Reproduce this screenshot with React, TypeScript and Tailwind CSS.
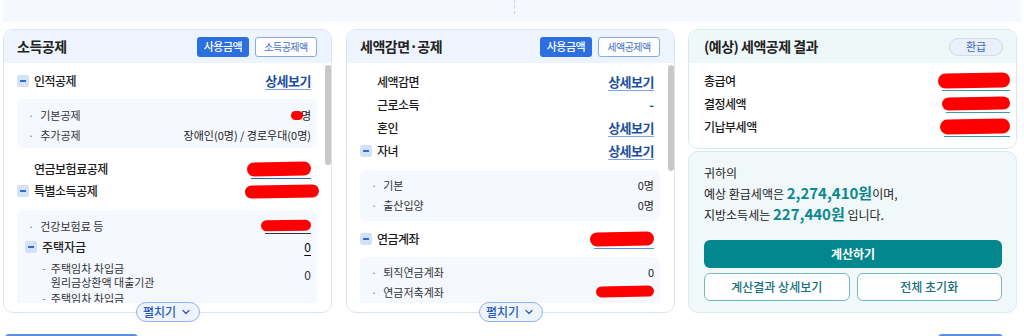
import { ChevronDown } from "lucide-react";

const KR = "font-['Noto_Sans_CJK_KR','Liberation_Sans',sans-serif]";

function Minus() {
  return (
    <span className="flex h-[12px] w-[12px] shrink-0 items-center justify-center rounded-[2px] bg-[#d4e2f8]">
      <span className="h-[2px] w-[6px] bg-[#2f6ad8]" />
    </span>
  );
}

function Detail() {
  return (
    <span className="text-[13px] font-bold tracking-[-0.5px] text-[#1d4f9f] underline decoration-[#7aa3e8] underline-offset-[3px]">
      상세보기
    </span>
  );
}

// 가려진 금액 (빨간 낙서)
function Blot({ size, line }: { size: string; line?: string }) {
  return (
    <span className="relative inline-flex items-center">
      {line && <span className={`absolute bottom-[-3px] left-[4px] right-0 h-[1px] ${line}`} />}
      <span className={`rounded-full bg-[#ff0000] -rotate-1 ${size}`} />
    </span>
  );
}

function SubRow({ label, value }: { label: string; value: React.ReactNode }) {
  return (
    <div className="flex h-[20px] items-center justify-between pl-[11px] pr-[6px] text-[11px] text-[#333]">
      <span className="flex items-center">
        <span className="mr-[6px] text-[#888]">·</span>
        {label}
      </span>
      <span className="text-[#222]">{value}</span>
    </div>
  );
}

function Row({ label, value, minus, h = "h-[22px]" }: { label: string; value: React.ReactNode; minus?: boolean; h?: string }) {
  return (
    <div className={`flex items-center justify-between pr-[6px] ${h}`}>
      <span className={`flex items-center gap-[5px] text-[12px] font-medium tracking-[-0.5px] text-[#1a1a1a] ${minus ? "" : "pl-[17px]"}`}>
        {minus && <Minus />}
        {label}
      </span>
      {value}
    </div>
  );
}

function HeaderButtons({ second }: { second: string }) {
  return (
    <div className="flex gap-[6px]">
      <button className="h-[20px] w-[52px] rounded-[3px] bg-[#2b6fe0] text-[11px] font-medium tracking-[-0.5px] text-white">
        사용금액
      </button>
      <button className="h-[20px] w-[62px] rounded-[3px] border border-[#86aaea] bg-white text-[10px] tracking-[-0.5px] text-[#3f6fcc]">
        {second}
      </button>
    </div>
  );
}

function Expand() {
  return (
    <button className="absolute bottom-[-10px] left-1/2 flex h-[20px] w-[64px] -translate-x-1/2 items-center justify-center gap-[4px] rounded-full border border-[#8fb3ec] bg-[#eef4fd] text-[12px] font-medium text-[#2a5cbc]">
      펼치기
      <ChevronDown size={12} strokeWidth={2.5} />
    </button>
  );
}

function Scrollbar({ thumb }: { thumb: string }) {
  return (
    <div className="w-[6px] shrink-0 pt-[2px]">
      <div className={`rounded-full bg-[#c8c8c8] ${thumb}`} />
    </div>
  );
}

function Panel({ title, second, thumb, children }: { title: string; second: string; thumb: string; children: React.ReactNode }) {
  return (
    <div className="relative h-[284px] w-[329px] shrink-0 rounded-[10px] border border-[#d9e4f4] bg-white">
      <div className="flex h-[33px] items-center justify-between rounded-t-[10px] bg-[#eef4fd] pl-[13px] pr-[14px]">
        <span className="text-[14px] font-bold tracking-[-0.5px] text-[#222]">{title}</span>
        <HeaderButtons second={second} />
      </div>
      <div className="flex h-[240px] overflow-hidden">
        <div className="flex-1 overflow-hidden pl-[13px] pr-[8px]">{children}</div>
        <Scrollbar thumb={thumb} />
      </div>
      <Expand />
    </div>
  );
}

export default function App() {
  return (
    <div className={`h-[336px] w-[1024px] overflow-hidden bg-white ${KR}`}>
      {/* 상단 영역 */}
      <div className="mx-[3px] flex h-[22px] justify-center bg-[#f5f8fe]">
        <div className="ml-[4px] h-[14px] border-l border-dashed border-[#c9d3e0]" />
      </div>

      <div className="mt-[7px] flex pl-[3px]">
        <Panel title="소득공제" second="소득공제액" thumb="h-[100px]">
          <div className="pt-[7px]">
            <Row minus label="인적공제" value={<Detail />} />
            <div className="mt-[7px] rounded-[6px] bg-[#f5f8fe] pb-[3px] pt-[6px]">
              <SubRow
                label="기본공제"
                value={
                  <span className="flex items-center">
                    <span className="mr-[-2px] h-[9px] w-[12px] rounded-full bg-[#ff0000]" />명
                  </span>
                }
              />
              <SubRow label="추가공제" value="장애인(0명) / 경로우대(0명)" />
            </div>
            <div className="mt-[10px]">
              <Row label="연금보험료공제" value={<Blot size="h-[14px] w-[64px]" line="bg-[#2f62c0]" />} />
              <Row minus label="특별소득공제" value={<span className="mr-[-8px]"><Blot size="h-[13px] w-[74px]" /></span>} />
            </div>
            <div className="mt-[8px] rounded-[6px] bg-[#f5f8fe] pt-[6px]">
              <SubRow label="건강보험료 등" value={<Blot size="h-[11px] w-[50px]" line="bg-[#333]" />} />
              <div className="flex h-[22px] items-center justify-between pl-[8px] pr-[6px]">
                <span className="flex items-center gap-[5px] text-[12px] font-medium text-[#222]">
                  <Minus />
                  주택자금
                </span>
                <span className="text-[12px] underline underline-offset-[3px]">0</span>
              </div>
              <div className="mt-[3px] flex items-center justify-between pl-[25px] pr-[6px] text-[11px] leading-[14px] text-[#333]">
                <span className="flex">
                  <span className="mr-[5px] text-[#888]">-</span>
                  <span>
                    주택임차 차입금
                    <br />
                    원리금상환액 대출기관
                  </span>
                </span>
                <span className="text-[12px]">0</span>
              </div>
              <div className="mt-[2px] flex pl-[25px] text-[11px] leading-[14px] text-[#333]">
                <span className="mr-[5px] text-[#888]">-</span>주택임차 차입금
              </div>
            </div>
          </div>
        </Panel>

        <div className="ml-[14px]">
          <Panel title="세액감면·공제" second="세액공제액" thumb="h-[106px]">
            <div className="pt-[7px]">
              <Row h="h-[23px]" label="세액감면" value={<Detail />} />
              <Row h="h-[23px]" label="근로소득" value={<span className="text-[13px] font-bold text-[#1d4f9f]">-</span>} />
              <Row h="h-[23px]" label="혼인" value={<Detail />} />
              <Row h="h-[23px]" minus label="자녀" value={<Detail />} />
              <div className="mt-[8px] rounded-[6px] bg-[#f5f8fe] pb-[6px] pt-[5px]">
                <SubRow label="기본" value="0명" />
                <SubRow label="출산입양" value="0명" />
              </div>
              <div className="mt-[7px]">
                <Row minus label="연금계좌" value={<Blot size="h-[14px] w-[64px]" line="bg-[#5d8fe0]" />} />
              </div>
              <div className="mt-[7px] rounded-[6px] bg-[#f5f8fe] pb-[6px] pt-[5px]">
                <SubRow label="퇴직연금계좌" value="0" />
                <SubRow label="연금저축계좌" value={<Blot size="h-[11px] w-[58px]" />} />
              </div>
            </div>
          </Panel>
        </div>

        <div className="ml-[13px] flex w-[329px] flex-col gap-[2px]">
          <div className="h-[120px] rounded-[10px] border border-[#d7ebee] bg-white">
            <div className="flex h-[33px] items-center justify-between rounded-t-[10px] bg-[#eef8f8] pl-[15px] pr-[13px]">
              <span className="text-[14px] font-bold tracking-[-0.5px] text-[#222]">(예상) 세액공제 결과</span>
              <span className="flex h-[18px] w-[54px] items-center justify-center rounded-full border border-[#cfdcf2] bg-[#e9f0fb] text-[11px] text-[#3a64b8]">
                환급
              </span>
            </div>
            <div className="pl-[15px] pr-[6px] pt-[6px] text-[12px] font-medium tracking-[-0.5px] text-[#1a1a1a]">
              <div className="flex h-[23px] items-center justify-between">
                총급여
                <Blot size="h-[15px] w-[72px]" line="bg-[#3c9aa3]" />
              </div>
              <div className="flex h-[23px] items-center justify-between">
                결정세액
                <Blot size="h-[13px] w-[68px]" line="bg-[#3c9aa3]" />
              </div>
              <div className="flex h-[23px] items-center justify-between">
                기납부세액
                <Blot size="h-[15px] w-[70px]" line="bg-[#3c9aa3]" />
              </div>
            </div>
          </div>

          <div className="h-[162px] rounded-[10px] border border-[#d9ecee] bg-[#f1f8f9] px-[15px] pt-[11px]">
            <div className="text-[12px] leading-[20px] text-[#222]">
              <div>귀하의</div>
              <div>
                예상 환급세액은{" "}
                <span className="text-[15px] font-bold text-[#0b8891]">2,274,410원</span>이며,
              </div>
              <div>
                지방소득세는{" "}
                <span className="text-[15px] font-bold text-[#0b8891]">227,440원</span> 입니다.
              </div>
            </div>
            <button className="mt-[15px] h-[28px] w-[298px] rounded-[6px] bg-[#03878f] text-[12px] font-bold text-white">
              계산하기
            </button>
            <div className="mt-[5px] flex w-[298px] gap-[7px]">
              <button className="h-[28px] flex-1 rounded-[6px] border border-[#76b9be] bg-white text-[12px] font-medium text-[#17707a]">
                계산결과 상세보기
              </button>
              <button className="h-[28px] flex-1 rounded-[6px] border border-[#76b9be] bg-white text-[12px] font-medium text-[#17707a]">
                전체 초기화
              </button>
            </div>
          </div>
        </div>
      </div>

      {/* 하단 버튼 윗부분 */}
      <div className="mt-[21px] flex justify-between pl-[5px] pr-[21px]">
        <div className="h-[4px] w-[133px] rounded-t-[6px] border-t-2 border-[#5b8fe6]" />
        <div className="h-[4px] w-[65px] rounded-t-[6px] border-t-2 border-[#5b8fe6]" />
      </div>
    </div>
  );
}
